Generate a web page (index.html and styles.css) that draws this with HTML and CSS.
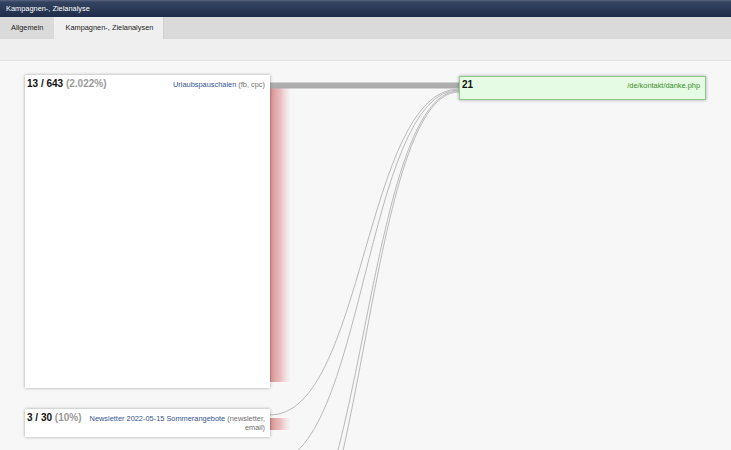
FILE: index.html
```html
<!DOCTYPE html>
<html lang="de">
<head>
<meta charset="utf-8">
<title>Kampagnen-, Zielanalyse</title>
<link rel="stylesheet" href="styles.css">
</head>
<body>
<div class="app">
  <header class="titlebar">Kampagnen-, Zielanalyse</header>
  <nav class="tabs">
    <span class="tab">Allgemein</span>
    <span class="tab tab-active">Kampagnen-, Zielanalysen</span>
  </nav>
  <div class="toolbar"></div>
  <main class="canvas">
    <svg class="links" width="731" height="389" viewBox="0 0 731 389" xmlns="http://www.w3.org/2000/svg">
      <defs>
        <linearGradient id="redfade" x1="0" y1="0" x2="1" y2="0">
          <stop offset="0" stop-color="#cf6a6a" stop-opacity="0.75"/>
          <stop offset="0.55" stop-color="#d98080" stop-opacity="0.45"/>
          <stop offset="1" stop-color="#e8b0b0" stop-opacity="0.05"/>
        </linearGradient>
      </defs>
      <rect x="270" y="27" width="20" height="294" fill="url(#redfade)"/>
      <rect x="270" y="357" width="20" height="12" fill="url(#redfade)"/>
      <rect x="270" y="21.5" width="192" height="6" fill="#adadad"/>
      <g fill="none" stroke="#b9b9b9" stroke-width="1">
        <path d="M270,354 C364.5,354 364.5,28 459,28"/>
        <path d="M270,402 C364.5,402 364.5,29 459,29"/>
        <path d="M270,504 C364.5,504 364.5,30 459,30"/>
        <path d="M270,533 C364.5,533 364.5,31 459,31"/>
      </g>
    </svg>

    <div class="node node-source node-1">
      <div class="node-head">
        <span class="stat">13 / 643 <span class="pct">(2.022%)</span></span>
        <span class="label"><span class="name">Urlaubspauschalen</span> (fb, cpc)</span>
      </div>
    </div>

    <div class="node node-source node-2">
      <div class="node-head">
        <span class="stat">3 / 30 <span class="pct">(10%)</span></span>
        <span class="label label-nowrap"><span class="name">Newsletter 2022-05-15 Sommerangebote</span> (newsletter,<br>email)</span>
      </div>
    </div>

    <div class="node node-goal">
      <div class="node-head">
        <span class="stat">21</span>
        <span class="label goal-label">/de/kontakt/danke.php</span>
      </div>
    </div>
  </main>
</div>
</body>
</html>
```
FILE: styles.css
```css
* { box-sizing: border-box; }
html, body { margin: 0; padding: 0; }
body {
  font-family: "Liberation Sans", Arial, sans-serif;
  font-size: 7.4px;
  color: #222;
  background: #f7f7f7;
}
.app {
  width: 731px;
  height: 450px;
  display: flex;
  flex-direction: column;
  overflow: hidden;
}
.titlebar {
  height: 17px;
  line-height: 17px;
  padding-left: 6px;
  color: #fff;
  background: linear-gradient(#5a6680 0, #34435f 12%, #1f2d4a 100%);
  flex: none;
}
.tabs {
  height: 22px;
  display: flex;
  background: #dadada;
  flex: none;
}
.tab {
  line-height: 22px;
  padding: 0 11px;
  color: #1a1a1a;
}
.tab-active {
  background: #efefef;
  border-right: 1px solid #d0d0d0;
  padding-right: 10px;
}
.toolbar {
  height: 22px;
  background: #efefef;
  border-bottom: 1px solid #e3e3e3;
  flex: none;
}
.canvas {
  position: relative;
  flex: 1;
  background: #f7f7f7;
  overflow: hidden;
}
.links {
  position: absolute;
  left: 0;
  top: 0;
}
.node {
  position: absolute;
  background: #fff;
  box-shadow: 0 0 3px rgba(0, 0, 0, 0.35);
  padding: 3px 5px 5px 2px;
}
.node-head {
  display: flex;
  align-items: baseline;
  justify-content: space-between;
  gap: 6px;
}
.stat {
  font-size: 10px;
  line-height: 11px;
  font-weight: bold;
  color: #111;
  white-space: nowrap;
}
.pct { color: #9a9a9a; }
.label {
  line-height: 9px;
  text-align: right;
  color: #6f6f6f;
}
.label-nowrap { white-space: nowrap; }
.name { color: #34558e; }
.node-1 {
  left: 25px;
  top: 14px;
  width: 245px;
  height: 313px;
}
.node-2 {
  left: 25px;
  top: 348px;
  width: 245px;
}
.node-goal {
  left: 459px;
  top: 15px;
  width: 247px;
  height: 24px;
  background: #e6fbe4;
  border: 1px solid #8fcc8b;
  padding: 2px 5px 2px 2px;
}
.goal-label { color: #3a8a2a; }
```
